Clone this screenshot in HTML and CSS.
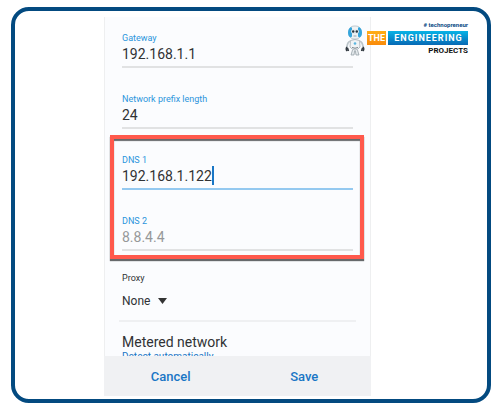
FILE: index.html
```html
<!DOCTYPE html>
<html lang="en">
<head>
  <meta charset="UTF-8">
  <meta name="viewport" content="width=device-width, initial-scale=1.0">
  <title>Network settings</title>
  <link rel="stylesheet" href="styles.css">
</head>
<body>
  <main class="frame">
    <form class="dialog">
      <div class="dialog-body">
        <div class="field">
          <label for="gateway">Gateway</label>
          <input id="gateway" type="text" value="192.168.1.1">
        </div>
        <div class="field">
          <label for="prefix">Network prefix length</label>
          <input id="prefix" type="text" value="24">
        </div>
        <div class="highlight">
          <div class="field active">
            <label for="dns1">DNS 1</label>
            <input id="dns1" type="text" value="192.168.1.122">
            <span class="caret"></span>
          </div>
          <div class="field">
            <label for="dns2">DNS 2</label>
            <input id="dns2" type="text" placeholder="8.8.4.4">
          </div>
        </div>
        <div class="proxy">
          <label for="proxy">Proxy</label>
          <div class="select-wrap">
            <select id="proxy">
              <option>None</option>
              <option>Manual</option>
            </select>
            <svg class="arrow" viewBox="0 0 9 6" aria-hidden="true"><path d="M0 0h9L4.5 6z" fill="#333"/></svg>
          </div>
        </div>
        <div class="metered">
          <div class="metered-title">Metered network</div>
          <a href="#" class="metered-value">Detect automatically</a>
        </div>
      </div>
      <div class="actions">
        <button type="button">Cancel</button>
        <button type="submit">Save</button>
      </div>
    </form>

    <div class="logo">
      <svg class="robot" viewBox="0 0 20 31" aria-hidden="true">
        <!-- head -->
        <rect x="4" y="1" width="12" height="13" rx="5" fill="#eef2f4" stroke="#a9b6bd" stroke-width=".7"/>
        <path d="M6 2Q3 3.500 3 7.500t2.500 5l1.500-1V3z" fill="#35a5dc"/>
        <path d="M14 2Q17 3.500 17 7.500t-2.500 5l-1.500-1V3z" fill="#35a5dc"/>
        <rect x="6" y="4.500" width="8" height="4" rx="2" fill="#dfe6ea"/>
        <circle cx="8.200" cy="6.500" r="1.200" fill="#27343d"/>
        <circle cx="11.800" cy="6.500" r="1.200" fill="#27343d"/>
        <path d="M8.500 11h3" stroke="#77858d" stroke-width=".7"/>
        <!-- body -->
        <path d="M5.500 15.500Q10 13.500 14.500 15.500L15 22Q13 25 10 25T5 22z" fill="#f0f3f5" stroke="#98a3aa" stroke-width=".7"/>
        <circle cx="10" cy="18.500" r="1.300" fill="#59b5df"/>
        <path d="M7 22.500q3 1.500 6 0" fill="none" stroke="#68747c" stroke-width=".9"/>
        <!-- arms -->
        <path d="M5.500 16Q2 17 2 23M14.500 16Q18 17 18 23" fill="none" stroke="#bcc5ca" stroke-width="1.800"/>
        <path d="M2 22q-1.500 2 0 4M2.500 23l1 3M18 22q1.500 2 0 4M17.500 23l-1 3" fill="none" stroke="#333b42" stroke-width="1.500"/>
        <!-- legs -->
        <path d="M7.500 25l-1.500 5h3l.7-4.500M12.500 25l1.500 5h-3l-.7-4.500" fill="#e5eaed" stroke="#8b969d" stroke-width=".7"/>
      </svg>
      <div class="logo-text">
        <div class="tagline"># technopreneur</div>
        <div class="name">
          <span class="the">THE</span>
          <span class="engineering">ENGINEERING</span>
        </div>
        <div class="projects">PROJECTS</div>
      </div>
    </div>
  </main>
</body>
</html>
```

FILE: styles.css
```css
* {
  box-sizing: border-box;
}
body {
  margin: 0;
  height: 100vh;
  padding: 7px 9px 5px 11px;
  background: #fff;
  font-family: Roboto, "Liberation Sans", sans-serif;
  color: #303234;
}
.frame {
  position: relative;
  display: flex;
  justify-content: center;
  height: 100%;
  padding: 6px 27px 3px 0;
  border: 4px solid #034a80;
  border-radius: 18px;
}
.dialog {
  display: flex;
  flex-direction: column;
  width: 60%;
  background: #fbfcfe;
  border: solid #eeeff0;
  border-width: 0 1px;
}
.dialog-body {
  flex: 1;
  min-height: 0;
  padding-top: 15px;
  overflow: hidden;
}
.field {
  position: relative;
  display: flex;
  flex-direction: column;
  margin: 0 17px 25px;
  border-bottom: 2px solid #e1e2e3;
}
.field label {
  font-size: 9px;
  line-height: 12px;
  color: #2b95dc;
}
.field input {
  width: 100%;
  height: 22px;
  padding: 0 0 2px;
  border: 0;
  outline: 0;
  background: none;
  font: 14px/20px Roboto, "Liberation Sans", sans-serif;
  color: #303234;
}
.field input::placeholder {
  color: #969899;
  opacity: 1;
}
.field.active {
  border-color: #94c9f0;
}
.caret {
  position: absolute;
  left: 90px;
  bottom: 3px;
  width: 2px;
  height: 19px;
  background: #1976c5;
}
.highlight {
  margin: -19px 6px 0 5px;
  padding: 15px 7px 4px 8px;
  border: 4px solid #ff594c;
  box-shadow: 0 2px 1px #66696b, inset 0 2px 1px #66696b;
}
.highlight .field {
  margin: 0 0 25px;
}
.highlight .field:last-child {
  margin-bottom: 0;
}
.proxy {
  margin: 0 14px;
  padding: 13px 3px 10px;
  border-bottom: 2px solid #eff0f2;
}
.proxy label {
  display: block;
  font-size: 9px;
  line-height: 12px;
}
.select-wrap {
  display: grid;
  align-items: center;
  width: 45px;
  margin-top: 8px;
}
.select-wrap select,
.arrow {
  grid-area: 1 / 1;
}
.select-wrap select {
  appearance: none;
  width: 100%;
  height: 18px;
  padding: 0;
  border: 0;
  background: none;
  font: 12px/18px Roboto, "Liberation Sans", sans-serif;
  color: #303234;
}
.arrow {
  justify-self: end;
  width: 9px;
  height: 6px;
  pointer-events: none;
}
.metered {
  margin: 0 17px;
  padding-top: 11px;
}
.metered-title {
  font-size: 14px;
  line-height: 18px;
}
.metered-value {
  display: block;
  font-size: 10px;
  line-height: 12px;
  color: #1976c5;
  text-decoration: none;
}
.actions {
  display: flex;
  height: 40px;
  margin: 0 -1px;
  background: #f0f1f3;
}
.actions button {
  flex: 1;
  padding: 2px 0 0;
  border: 0;
  background: none;
  font: 500 13px/18px Roboto, "Liberation Sans", sans-serif;
  color: #1976c5;
  cursor: pointer;
}

/* site logo, over the top right corner */
.logo {
  position: absolute;
  top: 8px;
  right: 19px;
  display: flex;
  align-items: center;
  gap: 2px;
}
.robot {
  width: 20px;
  height: 31px;
  margin-top: 5px;
}
.logo-text {
  display: flex;
  flex-direction: column;
  align-items: flex-end;
  font-weight: 700;
}
.tagline {
  font-size: 6px;
  line-height: 12px;
  color: #0b4b85;
}
.name {
  display: flex;
  gap: 2px;
  font-size: 9px;
  line-height: 14px;
  color: #fff;
}
.the {
  width: 19px;
  background: linear-gradient(#ffae16, #f98a0b);
  text-align: center;
}
.engineering {
  width: 80px;
  padding-left: 1px;
  background: linear-gradient(#08b3e6, #0769b5);
  letter-spacing: 1px;
  text-align: center;
}
.projects {
  font-size: 8px;
  line-height: 11px;
  color: #111;
}
```
